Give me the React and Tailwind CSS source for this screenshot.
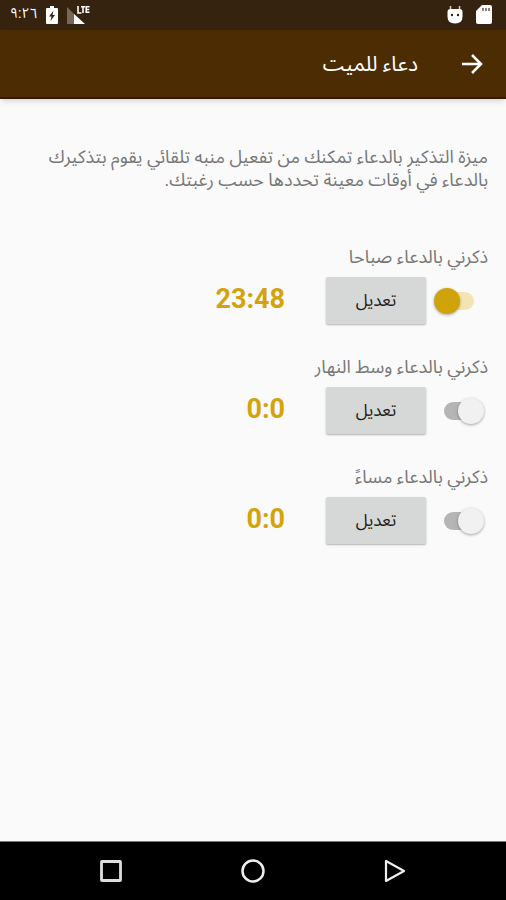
import React, { useState } from "react";

const initialReminders = [
  { id: "morning", label: "ذكرني بالدعاء صباحا", time: "23:48", enabled: true },
  { id: "noon", label: "ذكرني بالدعاء وسط النهار", time: "0:0", enabled: false },
  { id: "evening", label: "ذكرني بالدعاء مساءً", time: "0:0", enabled: false },
];

const StatusBar = () => (
  <div
    dir="ltr"
    className="h-[30px] bg-[#35230f] px-[10px] flex items-center justify-between text-white"
  >
    <div className="flex items-center gap-[9px]">
      <span className="text-sm leading-4 pb-1">٩:٢٦</span>
      <svg width="12" height="18" viewBox="0 0 12 18" aria-hidden="true">
        <path
          d="M4 0h4v2h3q1 0 1 1v14q0 1-1 1H1q-1 0-1-1V3q0-1 1-1h3z"
          fill="#fff"
        />
        <path d="M7.500 4.500 3 10.500h2.500L4.500 15 9 9H6.500z" fill="#35230f" />
      </svg>
      <svg width="24" height="20" viewBox="0 0 24 20" aria-hidden="true">
        <path d="M0 2v17h17z" fill="#77685a" />
        <path d="M7 9v10h11z" fill="#fff" />
        <path
          d="M11 1v7h3.500M14 1.800h4M16 1v7M22.500 1.800H19.200v5.400h3.300M19.200 4.500h3"
          fill="none"
          stroke="#fff"
          strokeWidth="1.600"
        />
      </svg>
    </div>
    <div className="flex items-center gap-[13px] pr-1">
      <svg width="16" height="18" viewBox="0 0 16 18" aria-hidden="true">
        <path
          d="M3.500 0v4M12.500 0v4"
          stroke="#d8cfb0"
          strokeWidth="1.500"
        />
        <path
          d="M0.500 6q0-3 3-3h9q3 0 3 3v4.500q0 7-7.500 7t-7.500-7z"
          fill="#fff"
        />
        <circle cx="5" cy="9" r="1.200" fill="#35230f" />
        <circle cx="11" cy="9" r="1.200" fill="#35230f" />
      </svg>
      <svg width="16" height="20" viewBox="0 0 16 20" aria-hidden="true">
        <path d="M6 0h8q2 0 2 2v15q0 2-2 2H2q-2 0-2-2V6z" fill="#fff" />
        <path
          d="M7 3v3M10 3v3M13 3v3"
          stroke="#6b5c4b"
          strokeWidth="1.500"
        />
      </svg>
    </div>
  </div>
);

const AppBar = () => (
  <header className="h-[69px] bg-[#4c2c02] border-b-2 border-[#3a1708] shadow-md px-[22px] flex items-center gap-[42px] text-white">
    <button type="button" aria-label="رجوع" className="cursor-pointer">
      <svg width="24" height="24" viewBox="0 0 24 24" aria-hidden="true">
        <path
          d="M2 12h19M12 3l9 9-9 9"
          fill="none"
          stroke="#fff"
          strokeWidth="2.500"
        />
      </svg>
    </button>
    <h1 className="text-[21px] leading-8">دعاء للميت</h1>
  </header>
);

const ReminderRow = ({ reminder, onToggle }) => {
  const { id, label, time, enabled } = reminder;

  return (
    <section className="flex flex-col gap-[6px]">
      <label htmlFor={id} className="text-[18px] leading-7 text-[#777777]">
        {label}
      </label>
      <div className="flex items-center">
        <div
          className={`w-[62px] flex shrink-0 ${enabled ? "pr-[14px]" : "pr-2"}`}
        >
          <input
            id={id}
            type="checkbox"
            checked={enabled}
            onChange={() => onToggle(id)}
            className="appearance-none relative w-9 h-[18px] rounded-full cursor-pointer bg-[#b5b5b5] checked:bg-[#f3e4b4] before:content-[''] before:absolute before:-top-1 before:-right-1 before:size-[26px] before:rounded-full before:bg-[#f1f1f1] before:shadow-[0_1px_3px_rgba(0,0,0,0.35)] checked:before:right-auto checked:before:-left-1 checked:before:bg-[#d1a30a]"
          />
        </div>
        <button
          type="button"
          className="w-[100px] h-[47px] rounded-xs bg-[#d6d8d7] text-[17px] text-[#1b1b1b] shadow-[0_1px_2px_rgba(0,0,0,0.3)] cursor-pointer"
        >
          تعديل
        </button>
        <span
          dir="ltr"
          className="mr-[41px] pb-1 text-[27px] leading-8 font-bold text-[#d3a30f]"
        >
          {time}
        </span>
      </div>
    </section>
  );
};

const NavBar = () => (
  <nav
    dir="ltr"
    className="h-[59px] bg-black border-t border-[#777777] px-10 flex items-center justify-around"
  >
    <button type="button" aria-label="التطبيقات" className="cursor-pointer">
      <svg width="24" height="24" viewBox="0 0 24 24" aria-hidden="true">
        <rect x="2.500" y="2.500" width="19" height="19" rx="0.500" fill="none" stroke="#ddd" strokeWidth="2.800" />
      </svg>
    </button>
    <button type="button" aria-label="الرئيسية" className="cursor-pointer">
      <svg width="24" height="24" viewBox="0 0 24 24" aria-hidden="true">
        <circle cx="12" cy="12" r="10.500" fill="none" stroke="#eee" strokeWidth="2.500" />
      </svg>
    </button>
    <button type="button" aria-label="السابق" className="cursor-pointer">
      <svg width="24" height="24" viewBox="0 0 24 24" aria-hidden="true">
        <path d="M3 2v20l18-10z" fill="none" stroke="#eee" strokeWidth="2.200" strokeLinejoin="round" />
      </svg>
    </button>
  </nav>
);

export default function App() {
  const [reminders, setReminders] = useState(initialReminders);

  const toggleReminder = (id) => {
    setReminders((p) =>
      p.map((r) => (r.id === id ? { ...r, enabled: !r.enabled } : r))
    );
  };

  return (
    <div
      dir="rtl"
      className="min-h-screen flex flex-col bg-[#fafafa] font-[Roboto,'Noto_Sans_Arabic','Noto_Sans','DejaVu_Sans',sans-serif]"
    >
      <StatusBar />
      <AppBar />

      <main className="flex-1 px-[18px] pt-[46px]">
        <p className="text-[18px] leading-[23px] text-[#777777]">
          ميزة التذكير بالدعاء تمكنك من تفعيل منبه تلقائي يقوم بتذكيرك بالدعاء
          في أوقات معينة تحددها حسب رغبتك.
        </p>

        <div className="mt-[52px] flex flex-col gap-[29px]">
          {reminders.map((r) => (
            <ReminderRow key={r.id} reminder={r} onToggle={toggleReminder} />
          ))}
        </div>
      </main>

      <NavBar />
    </div>
  );
}
